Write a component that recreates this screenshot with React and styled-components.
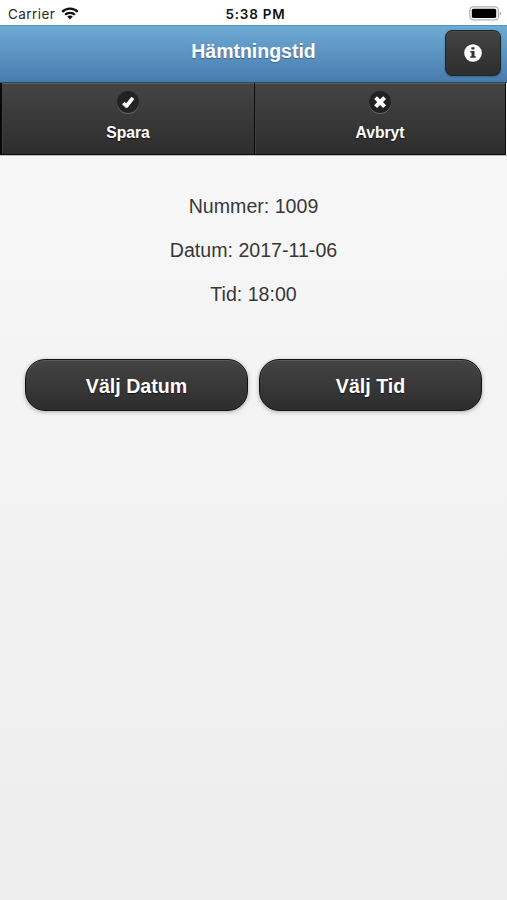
import React from "react";
import styled, { createGlobalStyle } from "styled-components";

const navItems = [
  { id: "save", label: "Spara", icon: "check" },
  { id: "cancel", label: "Avbryt", icon: "cross" },
];

const details = ["Nummer: 1009", "Datum: 2017-11-06", "Tid: 18:00"];

const actions = ["Välj Datum", "Välj Tid"];

const WifiIcon = () => (
  <svg width="18" height="13" viewBox="0 0 18 13">
    <g fill="none" stroke="#111" strokeWidth="2.3">
      <path d="M1.2 4.9 C5.4 0.6 12.6 0.6 16.8 4.9" />
      <path d="M4.1 7.8 C6.8 5.1 11.2 5.1 13.9 7.8" />
    </g>
    <path d="M9 12.4 L6.2 9.6 C7.8 8.2 10.2 8.2 11.8 9.6 Z" fill="#111" />
  </svg>
);

const BatteryIcon = () => (
  <svg width="33" height="15" viewBox="0 0 33 15">
    <rect x="0.8" y="0.8" width="28.6" height="13" rx="3.6" fill="#fff" stroke="#b0b0b0" strokeWidth="1.3" />
    <rect x="2.8" y="2.7" width="24.4" height="9.2" rx="1.6" fill="#000" />
    <path d="M30.8 5.2 C32.4 6 32.4 8.6 30.8 9.4 Z" fill="#999" />
  </svg>
);

const InfoIcon = () => (
  <svg width="18" height="18" viewBox="0 0 18 18">
    <circle cx="9" cy="9" r="8.8" fill="#fff" />
    <path d="M7.4 3.2 H10.5 V5.6 H7.4 Z M6.4 7 H10.5 V12.2 H11.8 V13.8 H6.2 V12.2 H7.5 V8.6 H6.4 Z" fill="#333" />
  </svg>
);

const NavIcon = ({ type }) => (
  <svg width="24" height="25" viewBox="0 0 24 25">
    <circle cx="12" cy="13" r="11" fill="#6a6a6a" />
    <circle cx="12" cy="12" r="11" fill="#222" />
    {type === "check" ? (
      <path
        d="M7.3 13 L10.5 16 L16.9 7.8"
        fill="none"
        stroke="#fff"
        strokeWidth="3.7"
        strokeLinejoin="round"
      />
    ) : (
      <path
        d="M7.6 7.6 L16.6 16.6 M16.6 7.6 L7.6 16.6"
        fill="none"
        stroke="#fff"
        strokeWidth="4.1"
      />
    )}
  </svg>
);

const App = () => {
  return (
    <>
      <GlobalStyle />
      <Page>
        <StatusBar>
          <Carrier>
            Carrier
            <WifiIcon />
          </Carrier>
          <Clock>5:38 PM</Clock>
          <Battery>
            <BatteryIcon />
          </Battery>
        </StatusBar>
        <Header>
          <Title>Hämtningstid</Title>
          <InfoButton type="button" aria-label="Info">
            <InfoIcon />
          </InfoButton>
        </Header>
        <NavBar>
          {navItems.map((item) => (
            <NavButton key={item.id} type="button">
              <NavIcon type={item.icon} />
              <span>{item.label}</span>
            </NavButton>
          ))}
        </NavBar>
        <Content>
          {details.map((line) => (
            <Detail key={line}>{line}</Detail>
          ))}
          <Actions>
            {actions.map((label) => (
              <ActionButton key={label} type="button">
                {label}
              </ActionButton>
            ))}
          </Actions>
        </Content>
      </Page>
    </>
  );
};

export default App;

const GlobalStyle = createGlobalStyle`
  * {
    box-sizing: border-box;
  }

  body {
    margin: 0;
    font-family: "Liberation Sans", Arial, sans-serif;
  }

  button {
    font-family: inherit;
    margin: 0;
    padding: 0;
  }

  svg {
    display: block;
  }
`;

const Page = styled.div`
  display: flex;
  flex-direction: column;
  width: 507px;
  height: 900px;
  overflow: hidden;
  background: #fff;
`;

const StatusBar = styled.div`
  display: grid;
  grid-template-columns: 1fr auto 1fr;
  align-items: center;
  height: 25px;
  padding: 2px 5px 0 8px;
  font-family: Inter, sans-serif;
  font-size: 13.5px;
  color: #111;
`;

const Carrier = styled.div`
  display: flex;
  align-items: center;
  gap: 6px;
  letter-spacing: 0.45px;
  color: #2a2a2a;
`;

const Clock = styled.div`
  padding-left: 1px;
  font-weight: 600;
  letter-spacing: 0.8px;
`;

const Battery = styled.div`
  display: flex;
  justify-content: flex-end;
`;

const Header = styled.header`
  display: grid;
  grid-template-columns: 62px 1fr 62px;
  height: 58px;
  border-top: 1px solid #5b93b8;
  border-bottom: 1px solid #254b63;
  background: linear-gradient(#6cabd3, #497bae);
`;

const Title = styled.h1`
  grid-column: 2;
  margin: 0;
  padding-top: 13px;
  font-size: 19.5px;
  line-height: 24px;
  text-align: center;
  color: #fff;
  text-shadow: 0 1px 1px #3e6790;
`;

const InfoButton = styled.button`
  display: flex;
  align-items: center;
  justify-content: center;
  width: 56px;
  height: 46px;
  margin-top: 4px;
  border: 1px solid #1b2832;
  border-radius: 7px;
  background: linear-gradient(#444, #2d2d2d);
  box-shadow: inset 0 1px 0 #4c4c4c, 0 1px 2px rgba(0, 0, 0, 0.25);
`;

const NavBar = styled.nav`
  display: grid;
  grid-template-columns: 253px 251px;
  height: 72px;
  padding-left: 2px;
  background: linear-gradient(to right, #080808 2px, #fff 2px);
`;

const NavButton = styled.button`
  display: flex;
  flex-direction: column;
  align-items: center;
  gap: 8px;
  padding-top: 7px;
  border: solid #0c0c0c;
  border-width: 0 1px 1px 0;
  background: linear-gradient(#444, #2d2d2d);
  box-shadow: inset 0 1px 0 #5c5c5c, inset 1px 0 0 #3f3f3f;
  font-size: 15.7px;
  font-weight: bold;
  line-height: 19px;
  color: #fff;
  text-shadow: 0 1px 1px #111;
`;

const Content = styled.main`
  flex: 1;
  padding: 28px 25px 0;
  border-top: 1px solid #c2c2c2;
  background: linear-gradient(#f7f7f7, #ededed);
`;

const Detail = styled.p`
  margin: 0;
  padding: 10px 0;
  font-size: 19.6px;
  line-height: 24px;
  text-align: center;
  color: #383838;
`;

const Actions = styled.div`
  display: grid;
  grid-template-columns: 1fr 1fr;
  gap: 11px;
  margin-top: 43px;
`;

const ActionButton = styled.button`
  height: 52px;
  padding-top: 2px;
  border: 1px solid #111;
  border-radius: 20px;
  background: linear-gradient(#444, #2d2d2d);
  box-shadow: inset 0 1px 0 #5c5c5c, 0 1px 4px rgba(0, 0, 0, 0.3);
  font-size: 19.6px;
  font-weight: bold;
  line-height: 24px;
  color: #fff;
  text-shadow: 0 1px 1px #111;
`;
